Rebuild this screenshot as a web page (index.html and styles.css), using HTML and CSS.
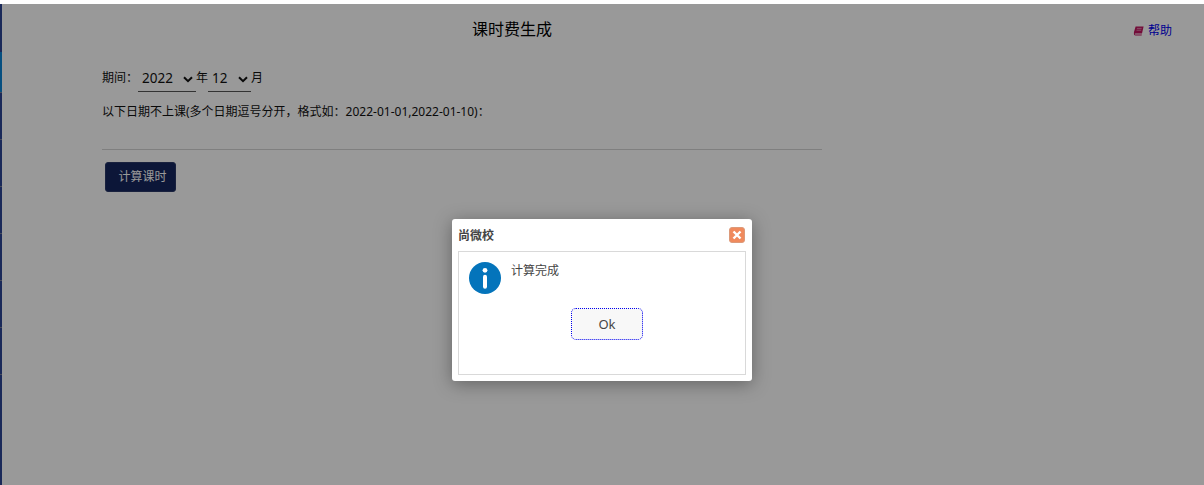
FILE: index.html
```html
<!DOCTYPE html>
<html lang="zh">
<head>
<meta charset="utf-8">
<title>课时费生成</title>
<link rel="stylesheet" href="styles.css">
</head>
<body>
<div class="topstrip"></div>
<div class="app">
  <nav class="rail">
    <i class="seg s1"></i><i class="seg s2"></i><i class="seg"></i><i class="seg"></i><i class="seg"></i><i class="seg"></i><i class="seg"></i><i class="seg"></i><i class="seg last"></i>
  </nav>
  <main class="content">
    <header class="head">
      <h1 class="title">课时费生成</h1>
      <a class="help" href="#">
        <svg class="book" width="11" height="10" viewBox="0 0 11 10"><path d="M2.6 0.5H10.6L9 7.6H2.2C1 7.6 .7 7 1 6Z" fill="#c01560"/><path d="M1 6.8C.6 8.4 1.2 9.5 2.6 9.5H8.6L8.9 8.6H2.6C1.9 8.6 1.7 8 2.4 7.6Z" fill="#c01560"/><path d="M3.9 2.4H8.6M3.5 4.2H8.2" stroke="#e8a0bc" stroke-width=".8"/></svg>帮助
      </a>
    </header>
    <form class="form">
      <div class="period">
        <span>期间：</span>
        <span class="sel y"><span>2022</span><svg width="10" height="7" viewBox="0 0 10 7"><path d="M1 1.2 5 5.2 9 1.2" fill="none" stroke="#111" stroke-width="2"/></svg></span>
        <span class="unit">年</span>
        <span class="sel m"><span>12</span><svg width="10" height="7" viewBox="0 0 10 7"><path d="M1 1.2 5 5.2 9 1.2" fill="none" stroke="#111" stroke-width="2"/></svg></span>
        <span class="unit">月</span>
      </div>
      <p class="note">以下日期不上课(多个日期逗号分开，格式如：2022-01-01,2022-01-10)：</p>
      <hr class="rule">
      <button type="button" class="calc">计算课时</button>
    </form>
  </main>
</div>
<div class="overlay"></div>
<div class="dialog">
  <div class="dlg-head">
    <span class="dlg-title">尚微校</span>
    <span class="close"><svg width="10" height="10" viewBox="0 0 10 10"><path d="M1.5 1.5 8.5 8.5M8.5 1.5 1.5 8.5" stroke="#fff" stroke-width="2.4"/></svg></span>
  </div>
  <div class="dlg-body">
    <div class="msg">
      <svg class="info" width="32" height="32" viewBox="0 0 32 32"><circle cx="16" cy="16" r="16" fill="#0474bb"/><circle cx="16" cy="8.3" r="2.4" fill="#fff"/><rect x="14" y="12.8" width="4" height="14" rx="2" fill="#fff"/></svg>
      <span class="msg-text">计算完成</span>
    </div>
    <div class="actions"><button type="button" class="ok">Ok</button></div>
  </div>
</div>
</body>
</html>
```
FILE: styles.css
```css
* { box-sizing: border-box; }
html, body { margin: 0; height: 100%; }
body {
  position: relative;
  height: 485px;
  overflow: hidden;
  background: #fff;
  color: #111;
  font: 12px/18px "Noto Sans", "Noto Sans CJK SC", sans-serif;
}
.topstrip { height: 4px; background: #fff; position: relative; z-index: 3; }
.app { display: flex; height: 481px; }
.rail { width: 2px; display: flex; flex-direction: column; background: #2c4595; }
.seg { display: block; height: 47px; border-bottom: 1px solid #78809c; flex: none; }
.seg.s1 { height: 48px; border-bottom: 0; }
.seg.s2 { height: 41px; background: #0a84d6; }
.seg.last { border-bottom: 0; }
.content { flex: 1; min-width: 0; }
.head { display: flex; height: 52px; position: relative; }
.title {
  margin: 14px 0 0 470px;
  font-size: 16px;
  line-height: 22px;
  font-weight: 400;
  color: #000;
}
.help {
  position: absolute;
  right: 32px;
  top: 18px;
  color: #0000f0;
  text-decoration: none;
  display: flex;
  align-items: center;
  gap: 4px;
  line-height: 18px;
}
.form { width: 720px; margin-left: 100px; }
.period { display: flex; align-items: flex-start; margin-top: 13px; line-height: 18px; }
.sel {
  display: flex;
  align-items: center;
  justify-content: space-between;
  height: 27px;
  margin-top: -4px;
  padding: 0 3px 0 4px;
  border-bottom: 1px solid #555;
  font-size: 13.5px;
}
.sel.y { width: 58px; }
.sel.m { width: 43px; margin-left: 0; }
.sel svg { margin-top: 2px; }
.unit { margin-left: 0; }
.note { margin: 11px 0 0; line-height: 18px; }
.rule { margin: 28px 0 0; height: 1px; border: 0; background: #d4d4d4; }
.calc {
  display: block;
  width: 71px;
  height: 30px;
  margin: 12px 0 0 3px;
  padding: 0 0 0 4px;
  border: 1px solid #2a3868;
  border-radius: 3px;
  background: #14255e;
  color: #fff;
  font: inherit;
}
.overlay { position: absolute; inset: 4px 0 0; background: rgba(0, 0, 0, .4); z-index: 2; }
.dialog {
  position: absolute;
  left: 452px;
  top: 219px;
  width: 300px;
  height: 162px;
  padding: 0 6px 6px;
  display: flex;
  flex-direction: column;
  background: #fff;
  border-radius: 3px;
  box-shadow: 0 3px 18px rgba(0, 0, 0, .35);
  z-index: 4;
  color: #333;
}
.dlg-head { height: 32px; flex: none; display: flex; align-items: center; justify-content: space-between; padding-top: 1px; }
.dlg-title { font-weight: 700; font-size: 12px; color: #444; }
.close {
  width: 16px;
  height: 16px;
  margin: -1px 1px 0 0;
  display: flex;
  align-items: center;
  justify-content: center;
  background: #f08a5d;
  border: 1px solid #dc9a7a;
  border-radius: 3px;
}
.dlg-body { flex: 1; border: 1px solid #d9d9d9; padding: 10px; }
.msg { display: flex; gap: 10px; align-items: flex-start; height: 46px; }
.msg-text { color: #444; }
.actions { display: flex; justify-content: center; padding-left: 10px; }
.ok {
  width: 72px;
  height: 32px;
  padding: 0;
  background: #f8f8f8;
  border: 1px dotted #0000f0;
  border-radius: 5px;
  color: #444;
  font: 13px/18px "Noto Sans", "Noto Sans CJK SC", sans-serif;
}
```
